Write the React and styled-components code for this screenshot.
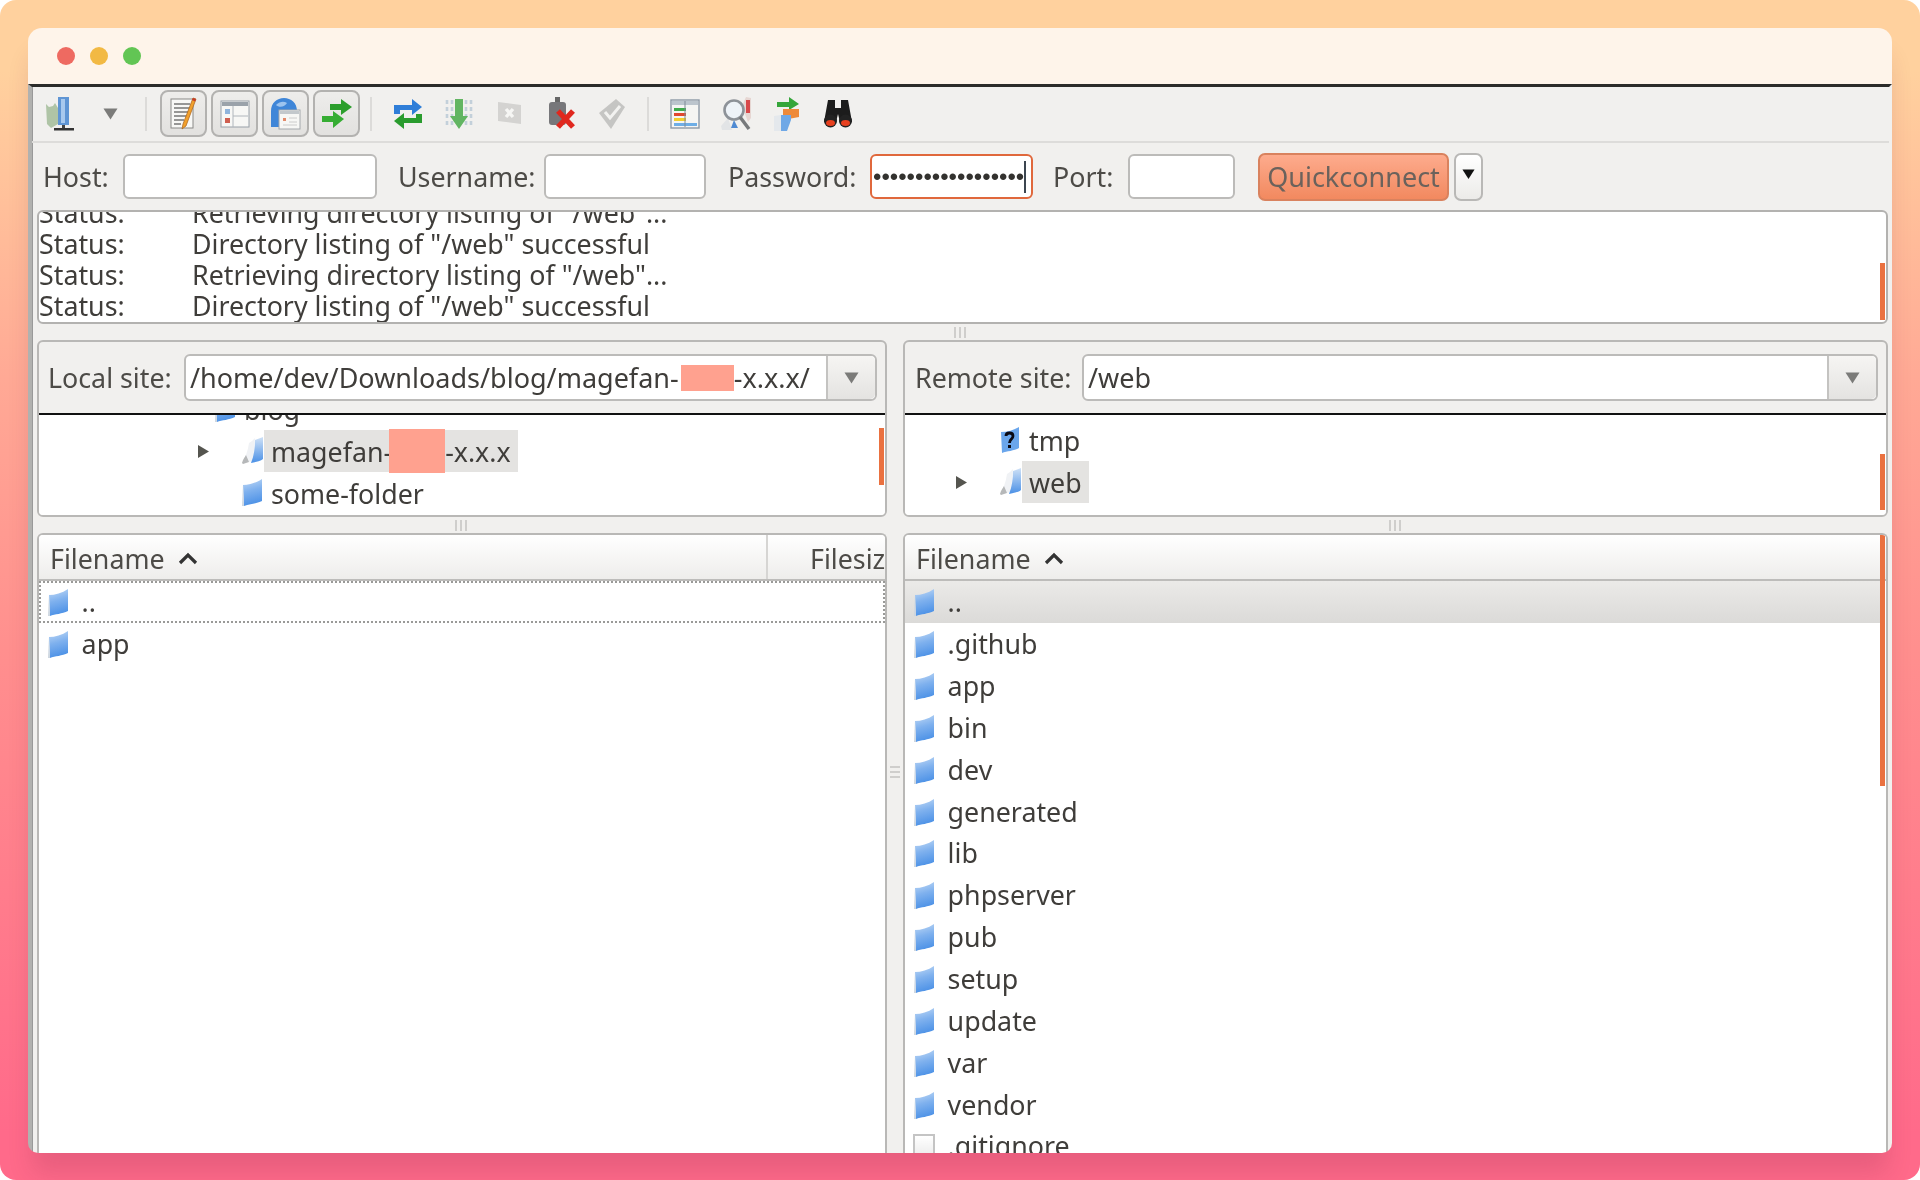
import React from "react"
import styled, { createGlobalStyle } from "styled-components"

const GlobalStyle = createGlobalStyle`
  html, body {
    margin: 0;
    padding: 0;
    background: #fff;
  }
  * {
    box-sizing: border-box;
  }
`

const Stage = styled.div`
  width: 1920px;
  height: 1180px;
  padding: 28px 28px 27px;
  border-radius: 16px;
  overflow: hidden;
  background: linear-gradient(180deg, #ffd19e 6%, #ffa995 32%, #ff8f8e 55%, #ff6a8a 96%);
  font-family: "Noto Sans", "Open Sans", sans-serif;
  font-size: 26.8px;
  color: #3f3d3a;
`

const Window = styled.div`
  height: 100%;
  display: flex;
  flex-direction: column;
  border-radius: 14px 14px 10px 10px;
  overflow: hidden;
  box-shadow: 0 24px 24px -4px rgba(110, 30, 60, 0.16);
`

const TitleBar = styled.div`
  height: 56px;
  flex: none;
  display: flex;
  align-items: center;
  gap: 15px;
  padding-left: 29px;
  background: #fef4ea;
`

const Dot = styled.span`
  width: 18px;
  height: 18px;
  border-radius: 50%;
  background: ${p => p.$color};
`

const Body = styled.div`
  flex: 1;
  min-height: 0;
  display: flex;
  flex-direction: column;
  background: #f1f0ee;
  border-top: 3px solid #2b2b29;
  border-left: 4px solid #b1b1af;
  border-right: 3px solid #f1f0ee;
  box-shadow: 1px 0 0 #999 inset;
  filter: blur(0.55px);
`

const Toolbar = styled.div`
  height: 56px;
  flex: none;
  display: flex;
  align-items: center;
  padding: 0 0 1px 2px;
  border-bottom: 2px solid #dddcda;
`

const IconSlot = styled.div`
  width: 51px;
  height: 40px;
  flex: none;
  display: flex;
  align-items: center;
  justify-content: center;
  opacity: ${p => p.$opacity || 1};
`

const Divider = styled.span`
  width: 2px;
  height: 34px;
  flex: none;
  margin: 0 ${p => p.$after}px 0 ${p => p.$before}px;
  background: #dcdbd9;
`

const ToggleGroup = styled.div`
  display: flex;
  gap: 4px;
`

const ToggleButton = styled.div`
  width: 47px;
  height: 47px;
  display: flex;
  align-items: center;
  justify-content: center;
  border: 2px solid #b3b2b0;
  border-radius: 8px;
  background: linear-gradient(180deg, #eeedeb, #e2e1df);
`

const QuickBar = styled.div`
  height: 67px;
  flex: none;
  display: flex;
  align-items: center;
  padding-left: 11px;
`

const QuickLabel = styled.label`
  flex: none;
  width: ${p => p.$width}px;
  margin-left: ${p => p.$gap || 0}px;
  white-space: nowrap;
  color: #4d4b47;
`

const QuickInput = styled.div`
  flex: none;
  width: ${p => p.$width}px;
  height: 45px;
  display: flex;
  align-items: center;
  padding-left: 1px;
  background: #fff;
  border: 2px solid ${p => (p.$focused ? "#e0683c" : "#bcbbb9")};
  border-radius: 6px;
`

const Bullets = styled.span`
  font-size: 24px;
  line-height: 1;
  color: #33322f;
  font-family: "Liberation Sans", sans-serif;
  overflow: hidden;
  white-space: nowrap;
`

const TextCaret = styled.span`
  width: 2px;
  height: 32px;
  flex: none;
  background: #3c4650;
`

const ConnectButton = styled.div`
  flex: none;
  width: 191px;
  height: 48px;
  margin-left: 23px;
  display: flex;
  align-items: center;
  justify-content: center;
  font-size: 27px;
  color: #6b625c;
  background: linear-gradient(180deg, #fdab8d, #f2895f);
  border: 2px solid #d9825e;
  border-radius: 7px;
`

const ConnectMenu = styled.div`
  flex: none;
  width: 29px;
  height: 48px;
  margin-left: 5px;
  display: flex;
  align-items: center;
  justify-content: center;
  padding-bottom: 4px;
  background: linear-gradient(180deg, #fff, #ecebe9);
  border: 2px solid #b9b8b6;
  border-radius: 7px;
`

const LogBox = styled.div`
  position: relative;
  height: 114px;
  flex: none;
  margin: 0 1px 0 5px;
  overflow: hidden;
  background: #fff;
  border: 2px solid #b3b2b0;
  border-radius: 6px;
`

const LogRows = styled.div`
  margin-top: -15px;
`

const LogRow = styled.div`
  display: grid;
  grid-template-columns: 153px 1fr;
  height: 31px;
  line-height: 31px;
  white-space: nowrap;
`

const Thumb = styled.span`
  position: absolute;
  right: 1px;
  top: ${p => p.$top}px;
  width: 5px;
  height: ${p => p.$height}px;
  background: #ea7140;
`

const HandleRow = styled.div`
  height: ${p => p.$height}px;
  flex: none;
  display: flex;
  align-items: center;
  justify-content: center;
`

const Grip = styled.span`
  width: ${p => (p.$vertical ? 10 : 14)}px;
  height: ${p => (p.$vertical ? 14 : 11)}px;
  background: repeating-linear-gradient(
    ${p => (p.$vertical ? "180deg" : "90deg")},
    #cfcecc 0 2px,
    transparent 2px 5px
  );
`

const Panes = styled.div`
  flex: 1;
  min-height: 0;
  display: grid;
  grid-template-columns: 850px 16px 1fr;
  margin: 0 1px 0 5px;
`

const Column = styled.div`
  display: flex;
  flex-direction: column;
  min-width: 0;
  min-height: 0;
`

const ColumnHandle = styled.div`
  display: flex;
  align-items: center;
  justify-content: center;
  padding-top: 52px;
`

const SitePanel = styled.div`
  position: relative;
  height: 177px;
  flex: none;
  display: flex;
  flex-direction: column;
  overflow: hidden;
  border: 2px solid #b9b8b6;
  border-radius: 6px;
`

const SiteHeader = styled.div`
  height: 73px;
  flex: none;
  display: flex;
  align-items: center;
  padding: 0 8px 0 ${p => p.$inset}px;
  border-bottom: 2px solid #111;
`

const SiteLabel = styled.span`
  flex: none;
  width: ${p => p.$width}px;
  color: #4d4b47;
  white-space: nowrap;
`

const Combo = styled.div`
  flex: 1;
  min-width: 0;
  height: 47px;
  display: flex;
  background: #fff;
  border: 2px solid #bcbbb9;
  border-radius: 6px;
`

const ComboValue = styled.div`
  flex: 1;
  min-width: 0;
  padding-left: 4px;
  display: flex;
  align-items: center;
  font-size: 27px;
  white-space: nowrap;
  overflow: hidden;
`

const Redaction = styled.span`
  flex: none;
  width: ${p => p.$width}px;
  height: ${p => p.$height}px;
  margin-left: ${p => p.$shift || 0}px;
  background: #ffa18f;
`

const ComboToggle = styled.div`
  flex: none;
  width: 49px;
  display: flex;
  align-items: center;
  justify-content: center;
  background: linear-gradient(180deg, #f6f5f3, #e4e3e1);
  border-left: 2px solid #c4c3c1;
  border-radius: 0 5px 5px 0;
`

const Tree = styled.div`
  flex: 1;
  min-height: 0;
  overflow: hidden;
  background: #fff;
  padding-top: ${p => p.$top || 0}px;
`

const TreeRows = styled.div`
  margin-top: ${p => p.$shift || 0}px;
`

const TreeRow = styled.div`
  height: 42px;
  display: flex;
  align-items: center;
  padding-left: ${p => p.$indent}px;
`

const ArrowSlot = styled.span`
  width: 44px;
  flex: none;
  display: flex;
  align-items: center;
`

const TreeIcon = styled.span`
  width: 23px;
  flex: none;
  display: flex;
  align-items: center;
`

const TreeLabel = styled.span`
  height: 42px;
  display: flex;
  align-items: center;
  padding: 0 7px;
  white-space: nowrap;
  background: ${p => (p.$selected ? "#e4e3e1" : "transparent")};
`

const FilePanel = styled.div`
  position: relative;
  flex: 1;
  min-height: 0;
  overflow: hidden;
  background: #fff;
  border: 2px solid #b9b8b6;
  border-bottom: 0;
  border-radius: 6px 6px 0 0;
`

const ListHeader = styled.div`
  height: 46px;
  display: flex;
  align-items: center;
  background: linear-gradient(180deg, #fff, #eeedeb);
  border-bottom: 2px solid #bdbcba;
  overflow: hidden;
`

const HeaderCell = styled.div`
  flex: none;
  width: ${p => p.$width}px;
  height: 100%;
  display: flex;
  align-items: center;
  gap: 13px;
  padding: 2px 0 0 ${p => p.$inset}px;
  white-space: nowrap;
  color: #4d4b47;
  border-right: ${p => (p.$divided ? "2px solid #d6d5d3" : "0")};
`

const FileRow = styled.div`
  height: 41.85px;
  display: flex;
  align-items: center;
  padding-left: 8px;
  margin-right: ${p => (p.$selected ? 5 : 0)}px;
  background: ${p =>
    p.$selected ? "linear-gradient(180deg, #ebeae8, #dbdad8)" : "transparent"};
  outline: ${p => (p.$focused ? "2px dotted #9a9a98" : "0")};
  outline-offset: -2px;
`

const FileIcon = styled.span`
  width: 34.6px;
  flex: none;
  display: flex;
  align-items: center;
  padding-top: 3px;
`

const FileName = styled.span`
  white-space: nowrap;
`

const Blank = styled.span`
  width: 22px;
  height: 26px;
  background: linear-gradient(180deg, #fff, #eaeaea);
  border: 2px solid #c4c4c4;
`

const Folder = ({ id = "f" }) => (
  <svg width="22" height="28" viewBox="0 0 22 28">
    <defs>
      <linearGradient id={id} x1="0.2" y1="0" x2="0.4" y2="1">
        <stop offset="0" stopColor="#bdd7f5" />
        <stop offset="0.45" stopColor="#7fb1ee" />
        <stop offset="1" stopColor="#4a90e6" />
      </linearGradient>
    </defs>
    <path d="M2 6C8 6 15 4 21 0V22C15 25 8 25 3 27Z" fill={`url(#${id})`} />
    <path d="M2 6L3 27 1 27Z" fill="#cdd6e0" />
  </svg>
)

const OpenFolder = () => (
  <svg width="23" height="28" viewBox="0 0 23 28">
    <defs>
      <linearGradient id="open" x1="0" y1="0" x2="0" y2="1">
        <stop offset="0" stopColor="#cfe1f6" />
        <stop offset="1" stopColor="#4a90e6" />
      </linearGradient>
    </defs>
    <path d="M8 6C10 5 12 3 14 1L12 24 2 26C4 20 7 14 8 6Z" fill="#f0f2f5" />
    <path d="M1 26C2 22 4 20 5 18L8 25 2 27Z" fill="#b6b8b9" />
    <path d="M14 3L22 0V22C20 24 15 25 10 26 13 19 14 10 14 3Z" fill="url(#open)" />
  </svg>
)

const QuestionFolder = () => (
  <svg width="21" height="28" viewBox="0 0 21 28">
    <path d="M2 6C8 6 15 4 20 1V22C15 25 8 25 3 27Z" fill="#6aa6ec" />
    <path
      d="M7 10C7 6 14 6 14 10 14 13 10.5 13 10.5 17"
      fill="none"
      stroke="#0a0a14"
      strokeWidth="2.8"
    />
    <rect x="9" y="19" width="3" height="3" fill="#0a0a14" />
  </svg>
)

const ExpandArrow = () => (
  <svg width="13" height="15" viewBox="0 0 13 15">
    <path d="M1 1L12 7.5 1 14Z" fill="#55554f" />
  </svg>
)

const SortCaret = () => (
  <svg width="20" height="13" viewBox="0 0 20 13">
    <path d="M2 11L10 3 18 11" fill="none" stroke="#333" strokeWidth="3.2" />
  </svg>
)

const DownTriangle = ({ color = "#7b7b79", size = 15 }) => (
  <svg width={size} height={size * 0.8} viewBox="0 0 15 12">
    <path d="M0.5 0.5H14.5L7.5 11.5Z" fill={color} />
  </svg>
)

const SiteManagerIcon = () => (
  <svg width="30" height="36" viewBox="0 0 30 36">
    <path d="M1 8L4 11 8 10 10 7 13 12V28L6 32 2 28Z" fill="#98b58e" opacity="0.75" />
    <rect x="13" y="1" width="11" height="28" fill="#5f95d4" />
    <rect x="16" y="3" width="4" height="24" fill="#a8c9ee" />
    <rect x="17" y="29" width="3" height="4" fill="#444" />
    <rect x="9" y="32" width="20" height="2.5" fill="#333" />
  </svg>
)

const LogIcon = () => (
  <svg width="30" height="34" viewBox="0 0 30 34">
    <rect x="2" y="2" width="22" height="29" fill="#f8f8f6" stroke="#8a8a88" />
    <path d="M5 7H21M5 11H21M5 15H21M5 19H18M5 23H15M5 27H12" stroke="#777" strokeWidth="1.4" />
    <path d="M27 2L17 29 13 32 14 27 24 1Z" fill="#f1a02c" stroke="#a8601a" strokeWidth="0.7" />
    <path d="M24 1L27 2 26.2 4.5 23 3Z" fill="#c53b2a" />
  </svg>
)

const TreeToggleIcon = () => (
  <svg width="30" height="30" viewBox="0 0 30 30">
    <rect x="1" y="2" width="28" height="26" fill="#f7f7f5" stroke="#98a0a8" />
    <rect x="2" y="3" width="26" height="4" fill="#9aa2aa" />
    <rect x="5" y="10" width="5" height="5" fill="#8fb4dc" />
    <rect x="5" y="19" width="5" height="5" fill="#cf5f50" />
    <path d="M13 7V28M13 17H28" stroke="#b0b6bc" />
  </svg>
)

const GlobeIcon = () => (
  <svg width="32" height="34" viewBox="0 0 32 34">
    <path d="M1 30V14C1 6 7 1 14 1 21 1 27 6 27 14H9V30Z" fill="#3f86d8" />
    <path d="M6 8C10 4 14 4 17 6 15 10 9 11 6 8Z" fill="#9cc3ee" />
    <rect x="9" y="13" width="21" height="19" fill="#f7f7f5" stroke="#a4a8ac" />
    <rect x="10" y="14" width="19" height="3" fill="#c3c8cc" />
    <rect x="13" y="21" width="3" height="3" fill="#e38a6a" />
    <path d="M19 21H27M19 25H27M13 28H27" stroke="#ccc" />
  </svg>
)

const TransferIcon = () => (
  <svg width="32" height="32" viewBox="0 0 32 32">
    <path d="M9 6H20V1L31 9 20 17V12H9Z" fill="#2c9e2c" />
    <path d="M1 18H12V13L23 21 12 30V24H1Z" fill="#36ad33" />
  </svg>
)

const RefreshIcon = () => (
  <svg width="30" height="32" viewBox="0 0 30 32">
    <path d="M1 16V7H19V1L29 9 19 17V12H7V16Z" fill="#2f7ed8" />
    <path d="M29 16V25H11V31L1 23 11 15V20H23V16Z" fill="#2a9c2e" />
  </svg>
)

const QueueIcon = () => (
  <svg width="30" height="34" viewBox="0 0 30 34">
    <path d="M3 3V31M8 3V31M22 3V31M27 3V31" stroke="#c3d0da" strokeWidth="2.6" strokeDasharray="4 3" />
    <path d="M11 2H19V19H24L15 32 6 19H11Z" fill="#62b562" />
  </svg>
)

const CancelIcon = () => (
  <svg width="30" height="28" viewBox="0 0 30 28">
    <path d="M3 2L26 5V24L3 21Z" fill="#a9a9a7" />
    <path d="M11 9L18 17M18 9L11 17" stroke="#fff" strokeWidth="3.4" />
  </svg>
)

const DisconnectIcon = () => (
  <svg width="30" height="36" viewBox="0 0 30 36">
    <rect x="9" y="1" width="5" height="6" fill="#666" />
    <rect x="3" y="6" width="17" height="23" rx="3" fill="#77777a" />
    <path d="M12 15L27 31M27 15L12 31" stroke="#e0281e" strokeWidth="5.4" />
  </svg>
)

const ReconnectIcon = () => (
  <svg width="30" height="34" viewBox="0 0 30 34">
    <path d="M2 16L19 2 28 10 14 32Z" fill="#a9a9a7" />
    <path d="M8 15L13 21 23 9" fill="none" stroke="#f4f4f2" strokeWidth="3" />
  </svg>
)

const FilterIcon = () => (
  <svg width="30" height="30" viewBox="0 0 30 30">
    <rect x="1" y="1" width="28" height="28" fill="#f5f5f3" stroke="#8d99a6" strokeWidth="1.4" />
    <rect x="2" y="2" width="26" height="4" fill="#bcc5cd" />
    <rect x="4" y="9" width="12" height="3" fill="#3faa4a" />
    <rect x="4" y="14" width="12" height="3" fill="#e0482e" />
    <rect x="4" y="19" width="12" height="3" fill="#f2ce2e" />
    <rect x="4" y="24" width="23" height="3" fill="#6eaee6" />
    <path d="M15 2V28" stroke="#7f8b96" />
  </svg>
)

const CompareIcon = () => (
  <svg width="32" height="36" viewBox="0 0 32 36">
    <path d="M26 1L31 2V22L28 26 22 10Z" fill="#e6d6d2" />
    <rect x="26" y="4" width="4" height="13" fill="#d8484a" />
    <path d="M1 30L8 22 12 34H2Z" fill="#e2e4e6" />
    <circle cx="14" cy="14" r="9.5" fill="#eef3f8" stroke="#8d9298" strokeWidth="2.6" />
    <path d="M20 21L29 33" stroke="#77797b" strokeWidth="3.4" />
    <path d="M14 24L18 32H11Z" fill="#4f8ad2" />
  </svg>
)

const SyncIcon = () => (
  <svg width="28" height="36" viewBox="0 0 28 36">
    <path d="M4 6H16V1L26 8 16 14V11H4Z" fill="#35a63a" />
    <path d="M10 13H26V21L10 24Z" fill="#ee8a3a" />
    <path d="M8 19H18V24L14 35H6Z" fill="#6fa8e6" />
    <path d="M1 20L8 19V35H1Z" fill="#e4e8ec" />
  </svg>
)

const BinocularsIcon = () => (
  <svg width="30" height="32" viewBox="0 0 30 32">
    <path d="M5 2H12V10H18V2H25L29 24H17L15 16 13 24H1Z" fill="#1c1c1c" />
    <circle cx="7.5" cy="23" r="6.5" fill="#222" />
    <circle cx="22.5" cy="23" r="6.5" fill="#222" />
    <ellipse cx="7.5" cy="25" rx="4.5" ry="3" fill="#e8401e" />
    <ellipse cx="22.5" cy="25" rx="4.5" ry="3" fill="#e8401e" />
  </svg>
)

const logLines = [
  'Retrieving directory listing of "/web"...',
  'Directory listing of "/web" successful',
  'Retrieving directory listing of "/web"...',
  'Directory listing of "/web" successful',
]

const remoteFiles = [
  ".github",
  "app",
  "bin",
  "dev",
  "generated",
  "lib",
  "phpserver",
  "pub",
  "setup",
  "update",
  "var",
  "vendor",
]

const App = () => (
  <>
    <GlobalStyle />
    <Stage>
      <Window>
        <TitleBar>
          <Dot $color="#ee6a61" />
          <Dot $color="#f2b944" />
          <Dot $color="#62c554" />
        </TitleBar>
        <Body>
          <Toolbar>
            <IconSlot>
              <SiteManagerIcon />
            </IconSlot>
            <IconSlot>
              <DownTriangle />
            </IconSlot>
            <Divider $before={9} $after={13} />
            <ToggleGroup>
              <ToggleButton>
                <LogIcon />
              </ToggleButton>
              <ToggleButton>
                <TreeToggleIcon />
              </ToggleButton>
              <ToggleButton>
                <GlobeIcon />
              </ToggleButton>
              <ToggleButton>
                <TransferIcon />
              </ToggleButton>
            </ToggleGroup>
            <Divider $before={10} $after={10} />
            <IconSlot>
              <RefreshIcon />
            </IconSlot>
            <IconSlot>
              <QueueIcon />
            </IconSlot>
            <IconSlot $opacity={0.4}>
              <CancelIcon />
            </IconSlot>
            <IconSlot>
              <DisconnectIcon />
            </IconSlot>
            <IconSlot $opacity={0.6}>
              <ReconnectIcon />
            </IconSlot>
            <Divider $before={10} $after={10} />
            <IconSlot>
              <FilterIcon />
            </IconSlot>
            <IconSlot>
              <CompareIcon />
            </IconSlot>
            <IconSlot>
              <SyncIcon />
            </IconSlot>
            <IconSlot>
              <BinocularsIcon />
            </IconSlot>
          </Toolbar>

          <QuickBar>
            <QuickLabel $width={80}>Host:</QuickLabel>
            <QuickInput $width={254} />
            <QuickLabel $width={146} $gap={21}>
              Username:
            </QuickLabel>
            <QuickInput $width={162} />
            <QuickLabel $width={142} $gap={22}>
              Password:
            </QuickLabel>
            <QuickInput $width={163} $focused>
              <Bullets>••••••••••••••••••</Bullets>
              <TextCaret />
            </QuickInput>
            <QuickLabel $width={75} $gap={20}>
              Port:
            </QuickLabel>
            <QuickInput $width={107} />
            <ConnectButton>Quickconnect</ConnectButton>
            <ConnectMenu>
              <DownTriangle color="#111" size={13} />
            </ConnectMenu>
          </QuickBar>

          <LogBox>
            <LogRows>
              {logLines.map((line, i) => (
                <LogRow key={i}>
                  <span>Status:</span>
                  <span>{line}</span>
                </LogRow>
              ))}
            </LogRows>
            <Thumb $top={51} $height={57} />
          </LogBox>

          <HandleRow $height={16}>
            <Grip />
          </HandleRow>

          <Panes>
            <Column>
              <SitePanel>
                <SiteHeader $inset={9}>
                  <SiteLabel $width={136}>Local site:</SiteLabel>
                  <Combo>
                    <ComboValue>
                      /home/dev/Downloads/blog/magefan-
                      <Redaction $width={53} $height={26} $shift={2} />
                      -x.x.x/
                    </ComboValue>
                    <ComboToggle>
                      <DownTriangle />
                    </ComboToggle>
                  </Combo>
                </SiteHeader>
                <Tree>
                  <TreeRows $shift={-27}>
                    <TreeRow $indent={131}>
                      <ArrowSlot />
                      <TreeIcon>
                        <Folder id="blog" />
                      </TreeIcon>
                      <TreeLabel>blog</TreeLabel>
                    </TreeRow>
                    <TreeRow $indent={158}>
                      <ArrowSlot>
                        <ExpandArrow />
                      </ArrowSlot>
                      <TreeIcon>
                        <OpenFolder />
                      </TreeIcon>
                      <TreeLabel $selected>
                        magefan-
                        <Redaction $width={56} $height={44} $shift={-3} />
                        -x.x.x
                      </TreeLabel>
                    </TreeRow>
                    <TreeRow $indent={158}>
                      <ArrowSlot />
                      <TreeIcon>
                        <Folder id="some" />
                      </TreeIcon>
                      <TreeLabel>some-folder</TreeLabel>
                    </TreeRow>
                  </TreeRows>
                </Tree>
                <Thumb $top={86} $height={57} />
              </SitePanel>
              <HandleRow $height={16}>
                <Grip />
              </HandleRow>
              <FilePanel>
                <ListHeader>
                  <HeaderCell $width={729} $inset={11} $divided>
                    Filename <SortCaret />
                  </HeaderCell>
                  <HeaderCell $width={200} $inset={42}>
                    Filesize
                  </HeaderCell>
                </ListHeader>
                <FileRow $focused>
                  <FileIcon>
                    <Folder id="lup" />
                  </FileIcon>
                  <FileName>..</FileName>
                </FileRow>
                <FileRow>
                  <FileIcon>
                    <Folder id="lapp" />
                  </FileIcon>
                  <FileName>app</FileName>
                </FileRow>
              </FilePanel>
            </Column>

            <ColumnHandle>
              <Grip $vertical />
            </ColumnHandle>

            <Column>
              <SitePanel>
                <SiteHeader $inset={10}>
                  <SiteLabel $width={167}>Remote site:</SiteLabel>
                  <Combo>
                    <ComboValue>/web</ComboValue>
                    <ComboToggle>
                      <DownTriangle />
                    </ComboToggle>
                  </Combo>
                </SiteHeader>
                <Tree $top={4}>
                  <TreeRow $indent={50}>
                    <ArrowSlot />
                    <TreeIcon>
                      <QuestionFolder />
                    </TreeIcon>
                    <TreeLabel>tmp</TreeLabel>
                  </TreeRow>
                  <TreeRow $indent={50}>
                    <ArrowSlot>
                      <ExpandArrow />
                    </ArrowSlot>
                    <TreeIcon>
                      <OpenFolder />
                    </TreeIcon>
                    <TreeLabel $selected>web</TreeLabel>
                  </TreeRow>
                </Tree>
                <Thumb $top={112} $height={56} />
              </SitePanel>
              <HandleRow $height={16}>
                <Grip />
              </HandleRow>
              <FilePanel>
                <ListHeader>
                  <HeaderCell $width={400} $inset={11}>
                    Filename <SortCaret />
                  </HeaderCell>
                </ListHeader>
                <FileRow $selected>
                  <FileIcon>
                    <Folder id="rup" />
                  </FileIcon>
                  <FileName>..</FileName>
                </FileRow>
                {remoteFiles.map(name => (
                  <FileRow key={name}>
                    <FileIcon>
                      <Folder id={`r-${name}`} />
                    </FileIcon>
                    <FileName>{name}</FileName>
                  </FileRow>
                ))}
                <FileRow>
                  <FileIcon>
                    <Blank />
                  </FileIcon>
                  <FileName>.gitignore</FileName>
                </FileRow>
                <Thumb $top={0} $height={251} />
              </FilePanel>
            </Column>
          </Panes>
        </Body>
      </Window>
    </Stage>
  </>
)

export default App
